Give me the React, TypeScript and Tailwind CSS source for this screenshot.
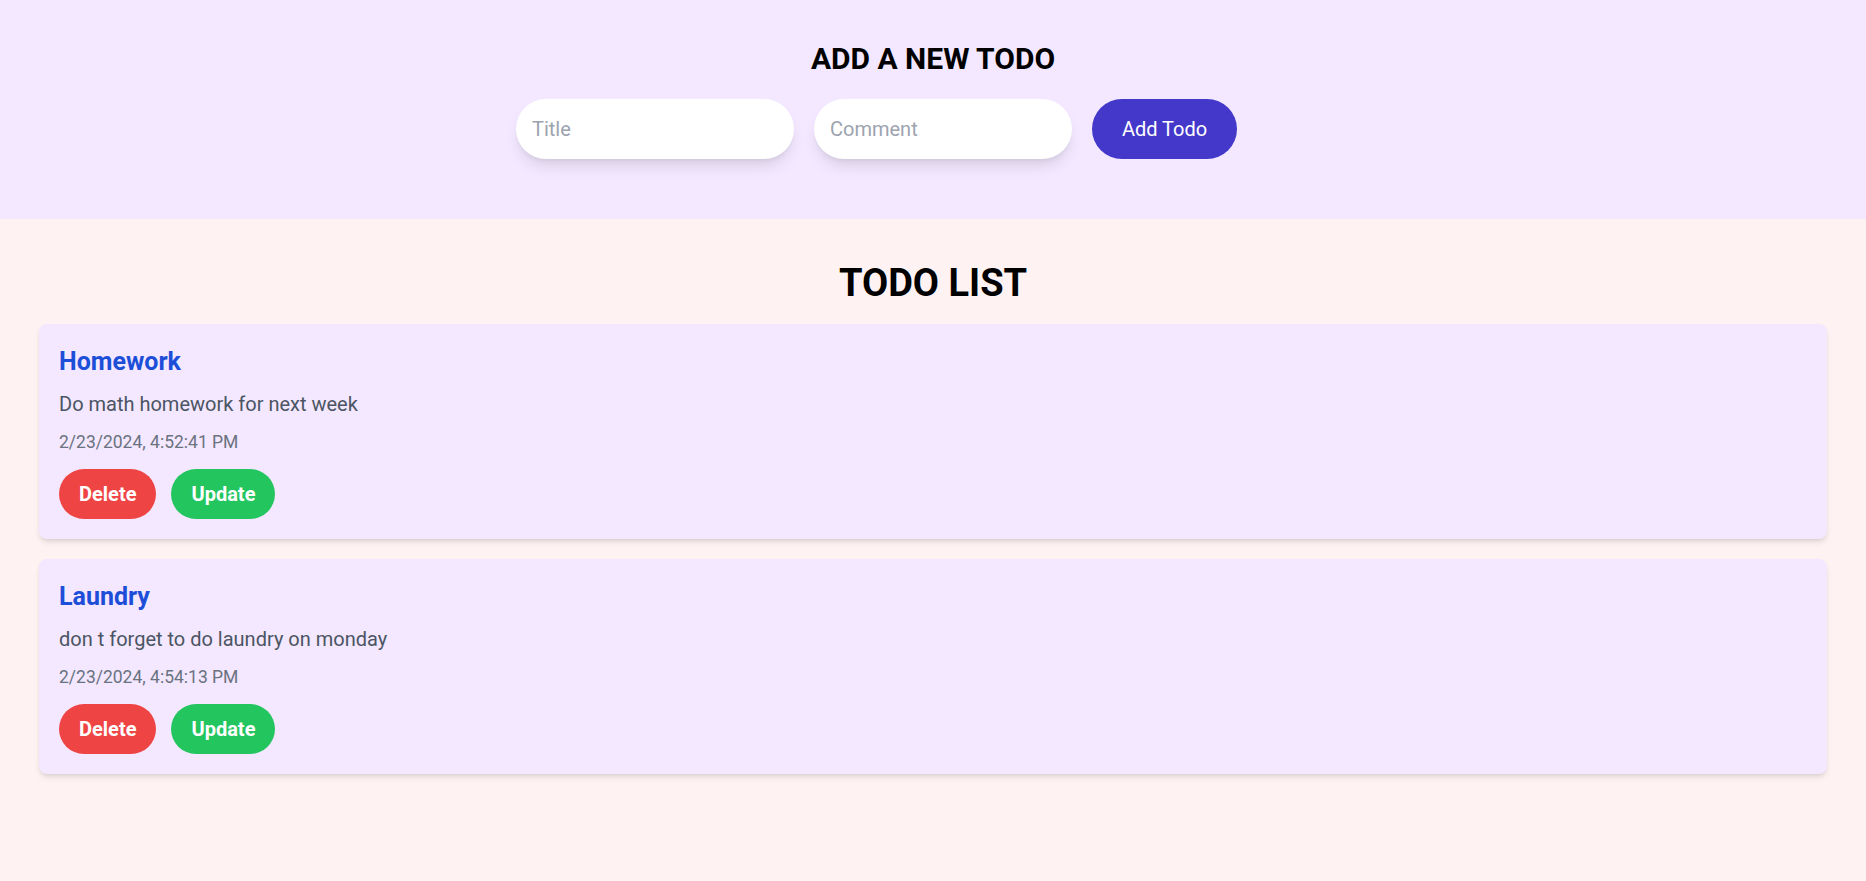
import { useState } from 'react';

type Todo = {
  id: number;
  title: string;
  comment: string;
  date: string;
};

const initialTodos: Todo[] = [
  {
    id: 1,
    title: 'Homework',
    comment: 'Do math homework for next week',
    date: '2/23/2024, 4:52:41 PM',
  },
  {
    id: 2,
    title: 'Laundry',
    comment: 'don t forget to do laundry on monday',
    date: '2/23/2024, 4:54:13 PM',
  },
];

export default function App() {
  const [todos, setTodos] = useState<Todo[]>(initialTodos);
  const [title, setTitle] = useState('');
  const [comment, setComment] = useState('');

  const addTodo = () => {
    if (!title) return;
    setTodos([
      ...todos,
      { id: Date.now(), title, comment, date: new Date().toLocaleString('en-US') },
    ]);
    setTitle('');
    setComment('');
  };

  return (
    <div className="min-h-screen bg-[#fef2f2] font-['Roboto',sans-serif] text-black">
      {/* add form */}
      <section className="bg-[#f3e8ff] pt-[41px] pb-[60px]">
        <h2 className="text-center text-3xl font-bold mb-[22px]">ADD A NEW TODO</h2>
        <div className="flex justify-center gap-5 pr-[113px]">
          <input
            className="w-[278px] h-[60px] rounded-full bg-white px-4 text-xl shadow-lg outline-none placeholder:text-[#9ca3af]"
            placeholder="Title"
            value={title}
            onChange={(e) => setTitle(e.target.value)}
          />
          <input
            className="w-[258px] h-[60px] rounded-full bg-white px-4 text-xl shadow-lg outline-none placeholder:text-[#9ca3af]"
            placeholder="Comment"
            value={comment}
            onChange={(e) => setComment(e.target.value)}
          />
          <button
            className="w-[145px] h-[60px] rounded-full bg-[#4338ca] text-xl text-white"
            onClick={addTodo}
          >
            Add Todo
          </button>
        </div>
      </section>

      {/* list */}
      <section className="px-[39px] pt-[44px] pb-10">
        <h2 className="text-center text-[38px] leading-10 font-bold mb-[21px]">TODO LIST</h2>
        <div className="flex flex-col gap-5">
          {todos.map((todo) => (
            <div key={todo.id} className="rounded-lg bg-[#f3e8ff] px-5 pt-[22px] pb-5 shadow-md">
              <h3 className="text-[25px] leading-8 font-bold text-[#1d4ed8] mb-3">{todo.title}</h3>
              <p className="text-xl text-[#4b5563] mb-[10px]">{todo.comment}</p>
              <p className="text-[17.5px] leading-7 text-[#6b7280] mb-[13px]">{todo.date}</p>
              <div className="flex gap-[15px]">
                <button
                  className="h-[50px] rounded-full bg-[#ef4444] px-5 text-xl font-bold text-white"
                  onClick={() => setTodos(todos.filter((t) => t.id !== todo.id))}
                >
                  Delete
                </button>
                <button className="h-[50px] rounded-full bg-[#22c55e] px-5 text-xl font-bold text-white">
                  Update
                </button>
              </div>
            </div>
          ))}
        </div>
      </section>
    </div>
  );
}
